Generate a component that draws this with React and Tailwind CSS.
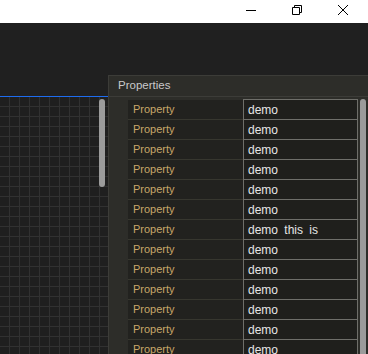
import React from "react";

const rows = [
  "demo","demo","demo","demo","demo","demo","demo this is","demo","demo","demo","demo","demo","demo",
];

export default function App() {
  return (
    <div className="w-[368px] h-[354px] overflow-hidden flex flex-col bg-[#202020]" style={{ fontFamily: '"Liberation Sans", Arial, sans-serif' }}>
      {/* title bar */}
      <div className="h-[23px] bg-white flex items-start justify-end shrink-0 pr-[2px]">
        <div className="w-[46px] h-[23px] flex items-start justify-center pt-[5px]">
          <svg width="10" height="10" viewBox="0 0 10 10"><path d="M0 5.5H10" stroke="#000" strokeWidth="1" /></svg>
        </div>
        <div className="w-[46px] h-[23px] flex items-start justify-center pt-[5px]">
          <svg width="10" height="10" viewBox="0 0 10 10" fill="none" stroke="#000" strokeWidth="1">
            <path d="M0.5 2.5H7.5V9.5H0.5Z" />
            <path d="M2.5 2.5V0.5H9.5V7.5H7.5" />
          </svg>
        </div>
        <div className="w-[46px] h-[23px] flex items-start justify-center pt-[5px]">
          <svg width="10" height="10" viewBox="0 0 10 10" stroke="#000" strokeWidth="1">
            <path d="M0 0L10 10M10 0L0 10" />
          </svg>
        </div>
      </div>
      {/* body */}
      <div className="flex-1 flex">
        <div className="w-[108px] flex flex-col shrink-0">
          <div className="h-[73px]" />
          <div className="h-px bg-[#1e6cf0]" />
          <div className="flex-1 relative bg-[#1f1f1f] bg-[linear-gradient(to_right,transparent_9px,#313131_9px),linear-gradient(to_bottom,transparent_9px,#313131_9px)] bg-[size:10px_10px]">
            <div className="absolute left-[99px] top-[2px] w-[6px] h-[88px] rounded-full bg-[#9b9b9b]" />
          </div>
        </div>
        <div className="flex-1 flex flex-col mt-[52px] border-l border-t border-[#3c3c38] bg-[#2d2d29]">
          <div className="h-[21px] border-b border-[#3c3c38] flex items-center pl-[9px] text-[11.5px] text-[#c9c9c9]">
            Properties
          </div>
          <div className="flex-1 flex pt-[2px]">
            <div className="flex-1 pl-[19px] flex flex-col">
              {rows.map((v, i) => (
                <div key={i} className="flex shrink-0">
                  <div className={`w-[115px] flex flex-col ${i === 0 ? "pt-px" : ""}`}>
                    <div className="h-[20px] bg-[#22221f] border-b border-[#37372f] flex items-center pl-[5px] text-[11px] text-[#c9a86a]">
                      Property
                    </div>
                  </div>
                  <div className={`w-[115px] bg-[#1f1f1c] border-x border-b border-[#6f6f6a] flex items-center pl-[4px] text-[12px] text-[#e6e6e6] ${i === 6 ? "[word-spacing:3px]" : ""} ${i === 0 ? "border-t h-[21px]" : "h-[20px]"}`}>
                    {v}
                  </div>
                </div>
              ))}
            </div>
            <div className="w-[10px] flex justify-start pl-[2px]">
              <div className="w-[6px] h-full rounded-t-full bg-[#9b9b9b]" />
            </div>
          </div>
        </div>
      </div>
    </div>
  );
}
